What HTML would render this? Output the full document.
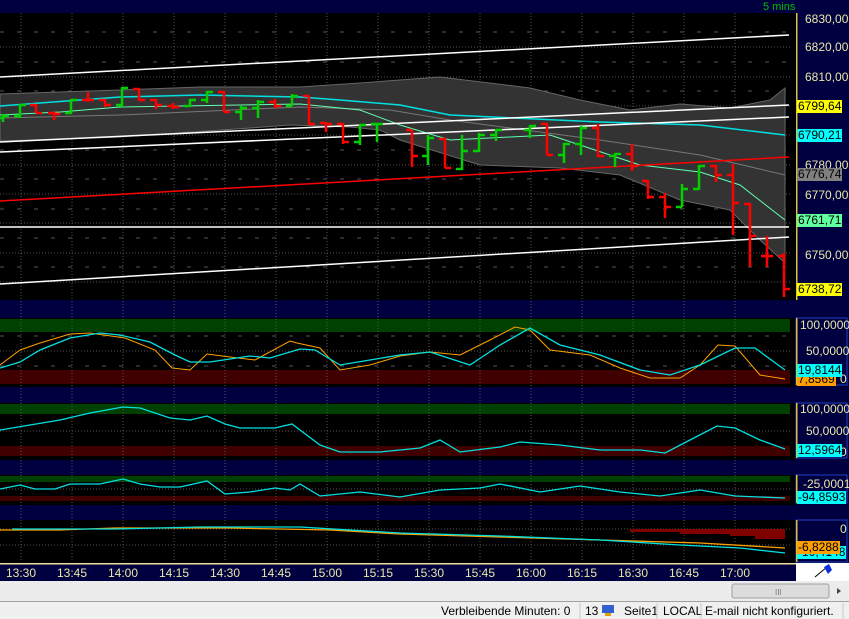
<!DOCTYPE html>
<html><head><meta charset="utf-8"><style>
body{margin:0;width:849px;height:619px;overflow:hidden;background:#000;font-family:"Liberation Sans",sans-serif}
.ax{position:absolute;font-size:12px;color:#e8e8a8;white-space:nowrap}
.bx{position:absolute;font-size:12px;color:#000;padding:0 1px;line-height:13px}
</style></head><body>
<svg width="849" height="619" style="position:absolute;left:0;top:0" xmlns="http://www.w3.org/2000/svg" font-family="Liberation Sans" font-size="12">
<rect width="849" height="619" fill="#000"/>
<rect x="0" y="0" width="849" height="13" fill="#000040"/>
<text x="763" y="10" fill="#00c000" font-size="11">5 mins</text>
<!-- separators -->
<rect x="0" y="300" width="796" height="18" fill="#000040"/>
<rect x="0" y="387" width="796" height="16" fill="#000040"/>
<rect x="0" y="460" width="796" height="15" fill="#000040"/>
<rect x="0" y="505" width="796" height="15" fill="#000040"/>
<!-- right axis -->
<rect x="796" y="13" width="53" height="550" fill="#000040"/>
<rect x="796" y="13" width="1.5" height="287" fill="#e0c040"/>
<rect x="796" y="318" width="51" height="67" fill="none" stroke="#2040c0"/>
<rect x="796" y="403" width="51" height="55" fill="none" stroke="#2040c0"/>
<rect x="796" y="475" width="51" height="28" fill="none" stroke="#2040c0"/>
<rect x="796" y="520" width="51" height="42" fill="none" stroke="#2040c0"/>
<rect x="796" y="318" width="1.5" height="67" fill="#e0c040"/>
<rect x="796" y="403" width="1.5" height="55" fill="#e0c040"/>
<rect x="796" y="475" width="1.5" height="28" fill="#e0c040"/>
<rect x="796" y="520" width="1.5" height="42" fill="#e0c040"/>
<!-- panel bands -->
<rect x="0" y="319" width="790" height="13" fill="#004000"/>
<rect x="0" y="370" width="790" height="14" fill="#400000"/>
<rect x="0" y="404" width="790" height="10" fill="#004000"/>
<rect x="0" y="446" width="790" height="10" fill="#400000"/>
<rect x="0" y="476" width="790" height="6" fill="#004000"/>
<rect x="0" y="496" width="790" height="5" fill="#400000"/>
<!-- grid -->
<g stroke="#555" stroke-width="1" stroke-dasharray="1,2">
<path d="M21 13V562M72 13V562M123 13V562M174 13V562M225 13V562M276 13V562M327 13V562M378 13V562M429 13V562M480 13V562M531 13V562M582 13V562M633 13V562M684 13V562M735 13V562"/>
<path d="M0 47H790M0 77H790M0 106H790M0 135H790M0 165H790M0 194H790M0 223H790M0 253H790M0 282H790M0 351H790M0 431H790M0 489H790M0 529H790M0 545H790"/>
</g>
<g stroke="#555" stroke-dasharray="4,13"><path d="M0 32H790M0 62H790M0 91H790M0 120H790M0 150H790M0 179H790M0 209H790M0 238H790M0 267H790M0 336H790M0 366H790"/></g>
<!-- bollinger -->
<path d="M0 94L120 90L200 87L300 87L360 83L400 80L440 77L530 88L580 100L630 110L680 104L730 108L770 100L785 88L785 263L760 240L730 210L680 200L620 175L560 168L480 165L400 140L380 130L350 127L290 125L250 128L120 137L0 141Z" fill="#333" stroke="#666"/>
<polyline points="0,118 120,115 300,107 390,110 450,120 600,140 700,155 785,175" fill="none" stroke="#777"/>
<polyline points="0,106 120,97 200,95 300,97 340,100 400,105 450,115 600,122 700,125 785,135" fill="none" stroke="#00e0e0" stroke-width="1.5"/>
<polyline points="0,115 60,112 120,107 300,104 360,110 400,125 450,140 550,135 640,165 700,172 740,185 785,220" fill="none" stroke="#60ffb0"/>
<g stroke="#fff" stroke-width="1.5" fill="none">
<path d="M0 77L789 35M0 142L789 105M0 152L789 117M0 227H789M0 284L789 237"/>
</g>
<path d="M0 201L789 157" stroke="#f00" stroke-width="1.5"/>
<!-- bars -->
<g fill="none" stroke-width="2.5">
<path stroke="#00d000" d="M-3 118H3M3 114V122M3 116H9M14 116H20M20 104V118M20 105H26M65 113H71M71 99V114M71 100H77M116 105H122M122 87V107M122 88H128M184 106H190M190 99V107M190 100H196M201 100H207M207 91V103M207 92H213M235 112H241M241 106V120M241 108H247M252 108H258M258 100V118M258 102H264M286 106H292M292 94V106M292 96H298M354 142H360M360 124V145M360 125H366M371 124H377M377 123V142M377 124H383M422 156H428M428 135V165M428 138H434M456 169H462M462 135V170M462 151H468M473 151H479M479 133V152M479 135H485M490 135H496M496 129V141M496 130H502M524 130H530M530 125V138M530 126H536M558 155H564M564 143V163M564 144H570M575 144H581M581 126V155M581 128H587M609 156H615M615 153V167M615 154H621M676 207H682M682 184V207M682 189H688M693 189H699M699 165V190M699 166H705"/>
<path stroke="#f00" d="M30 105H36M36 104V113M36 113H42M48 113H54M54 112V120M54 114H60M82 100H88M88 92V102M88 100H94M99 100H105M105 99V107M105 105H111M133 89H139M139 88V101M139 100H145M150 100H156M156 99V109M156 105H162M167 106H173M173 103V109M173 107H179M218 92H224M224 91V112M224 112H230M269 102H275M275 99V108M275 106H281M303 96H309M309 96V125M309 124H315M320 123H326M326 122V132M326 124H332M337 124H343M343 123V144M343 142H349M406 130H412M412 130V167M412 156H418M439 139H445M445 138V168M445 168H451M541 124H547M547 123V155M547 155H553M592 128H598M598 124V157M598 156H604M626 154H632M632 144V171M632 166H638M642 181H648M648 180V199M648 197H654M659 197H665M665 193V218M665 207H671M710 166H716M716 165V182M716 175H722M727 175H733M733 164V235M733 203H739M744 204H750M750 203V267M750 236H756M761 256H767M767 236V267M767 256H773M778 256H784M784 253V297M784 289H790"/>
</g>
<!-- panel1 lines -->
<polyline fill="none" stroke="#ffa000" points="0,365 20,350 40,343 70,334 90,333 125,338 155,350 172,368 190,370 207,354 230,357 255,360 290,341 297,343 320,348 340,370 370,365 400,356 430,352 460,355 490,340 515,327 530,330 550,350 590,355 620,368 650,378 680,378 700,365 718,345 735,346 760,375 785,379"/>
<polyline fill="none" stroke="#00e0e0" stroke-width="1.3" points="0,368 20,362 40,350 70,338 100,333 120,335 150,342 175,355 190,362 210,362 230,359 250,356 270,358 300,349 315,350 340,365 370,360 400,355 430,352 470,365 500,345 530,328 560,345 600,355 640,370 670,375 700,365 735,348 755,348 785,370"/>
<polyline fill="none" stroke="#00e0e0" stroke-width="1.3" points="0,430 30,425 60,420 90,413 123,407 140,408 170,418 190,420 207,416 225,424 240,428 275,428 292,424 300,430 320,445 340,452 380,452 420,448 440,440 460,452 500,447 520,442 560,445 600,450 640,450 665,453 690,440 717,426 735,428 760,440 785,449"/>
<polyline fill="none" stroke="#00e0e0" stroke-width="1.3" points="0,489 20,485 35,489 55,489 70,484 100,484 123,479 140,484 160,487 180,487 207,481 225,494 250,492 275,488 290,490 300,484 320,496 360,492 400,497 440,490 480,488 500,484 540,492 580,486 620,492 660,496 700,490 735,496 785,498"/>
<!-- panel4 -->
<g fill="#800000"><rect x="630" y="529" width="50" height="3"/><rect x="680" y="529" width="50" height="5"/><rect x="730" y="529" width="25" height="7"/><rect x="755" y="529" width="30" height="10"/></g>
<polyline fill="none" stroke="#ffa000" stroke-width="1.3" points="0,530 60,530 115,528 150,528 230,528 330,530 400,534 500,537 600,540 700,543 785,548"/>
<polyline fill="none" stroke="#00e0e0" stroke-width="1.3" points="12,529 115,529 200,527 300,527 400,533 500,536 600,540 680,545 740,548 785,553"/>
<!-- time axis -->
<rect x="0" y="563" width="796" height="18" fill="#000040"/>
<rect x="0" y="563" width="796" height="1.5" fill="#f0e0a0"/>
<g fill="#e8e8a8" text-anchor="middle" font-size="12">
<text x="21" y="577">13:30</text><text x="72" y="577">13:45</text><text x="123" y="577">14:00</text><text x="174" y="577">14:15</text><text x="225" y="577">14:30</text><text x="276" y="577">14:45</text><text x="327" y="577">15:00</text><text x="378" y="577">15:15</text><text x="429" y="577">15:30</text><text x="480" y="577">15:45</text><text x="531" y="577">16:00</text><text x="582" y="577">16:15</text><text x="633" y="577">16:30</text><text x="684" y="577">16:45</text><text x="735" y="577">17:00</text>
</g>
<rect x="796" y="563" width="53" height="18" fill="#fff"/>
<path d="M815 577L827 567" stroke="#000"/><path d="M824 567L829 564L832 570L828 574Z" fill="#1030e0"/>
<!-- scrollbar -->
<rect x="0" y="581" width="849" height="20" fill="#ececec"/>
<rect x="732" y="584" width="97" height="14" rx="2" fill="#dcdcdc" stroke="#a0a0a0"/>
<text x="775" y="595" fill="#777" font-size="8">III</text>
<path d="M837 588L841 591L837 594Z" fill="#444"/>
<rect x="0" y="601" width="849" height="18" fill="#f0f0f0"/>
<rect x="0" y="601" width="849" height="1" fill="#a0a0a0"/>
<g fill="#000" font-size="12"><text x="441" y="615">Verbleibende Minuten: 0</text><text x="585" y="615">13</text><text x="624" y="615">Seite1</text><text x="663" y="615">LOCAL</text><text x="705" y="615">E-mail nicht konfiguriert.</text></g>
<g stroke="#c8c8c8"><path d="M580 603V619M657 603V619M701 603V619M843 603V619"/></g>
<rect x="602" y="605" width="12" height="8" fill="#3060d0"/><rect x="605" y="613" width="6" height="3" fill="#e0a000"/>
</svg>
<div class="ax" style="left:805px;top:12px">6830,00</div>
<div class="ax" style="left:805px;top:40px">6820,00</div>
<div class="ax" style="left:805px;top:70px">6810,00</div>
<div class="ax" style="left:805px;top:158px">6780,00</div>
<div class="ax" style="left:805px;top:188px">6770,00</div>
<div class="ax" style="left:805px;top:248px">6750,00</div>
<div class="bx" style="left:797px;top:100px;background:#ffff00">6799,64</div>
<div class="bx" style="left:797px;top:129px;background:#00ffff">6790,21</div>
<div class="bx" style="left:797px;top:168px;background:#808080">6776,74</div>
<div class="bx" style="left:797px;top:214px;background:#60ffa0">6761,71</div>
<div class="bx" style="left:797px;top:283px;background:#ffff00">6738,72</div>
<div class="ax" style="left:800px;top:318px">100,0000</div>
<div class="ax" style="left:806px;top:344px">50,0000</div>
<div class="ax" style="left:840px;top:372px">0</div>
<div class="bx" style="left:797px;top:373px;background:#ffa000">7,8569</div>
<div class="bx" style="left:797px;top:364px;background:#00ffff">19,8144</div>
<div class="ax" style="left:800px;top:402px">100,0000</div>
<div class="ax" style="left:806px;top:424px">50,0000</div>
<div class="ax" style="left:840px;top:445px">0</div>
<div class="bx" style="left:797px;top:444px;background:#00ffff">12,5964</div>
<div class="ax" style="left:803px;top:477px">-25,0001</div>
<div class="bx" style="left:797px;top:491px;background:#00ffff">-94,8593</div>
<div class="ax" style="left:840px;top:522px">0</div>
<div class="bx" style="left:797px;top:546px;background:#00ffff">-10,4148</div>
<div class="bx" style="left:797px;top:541px;background:#ffa000">-6,8288</div>
</body></html>
